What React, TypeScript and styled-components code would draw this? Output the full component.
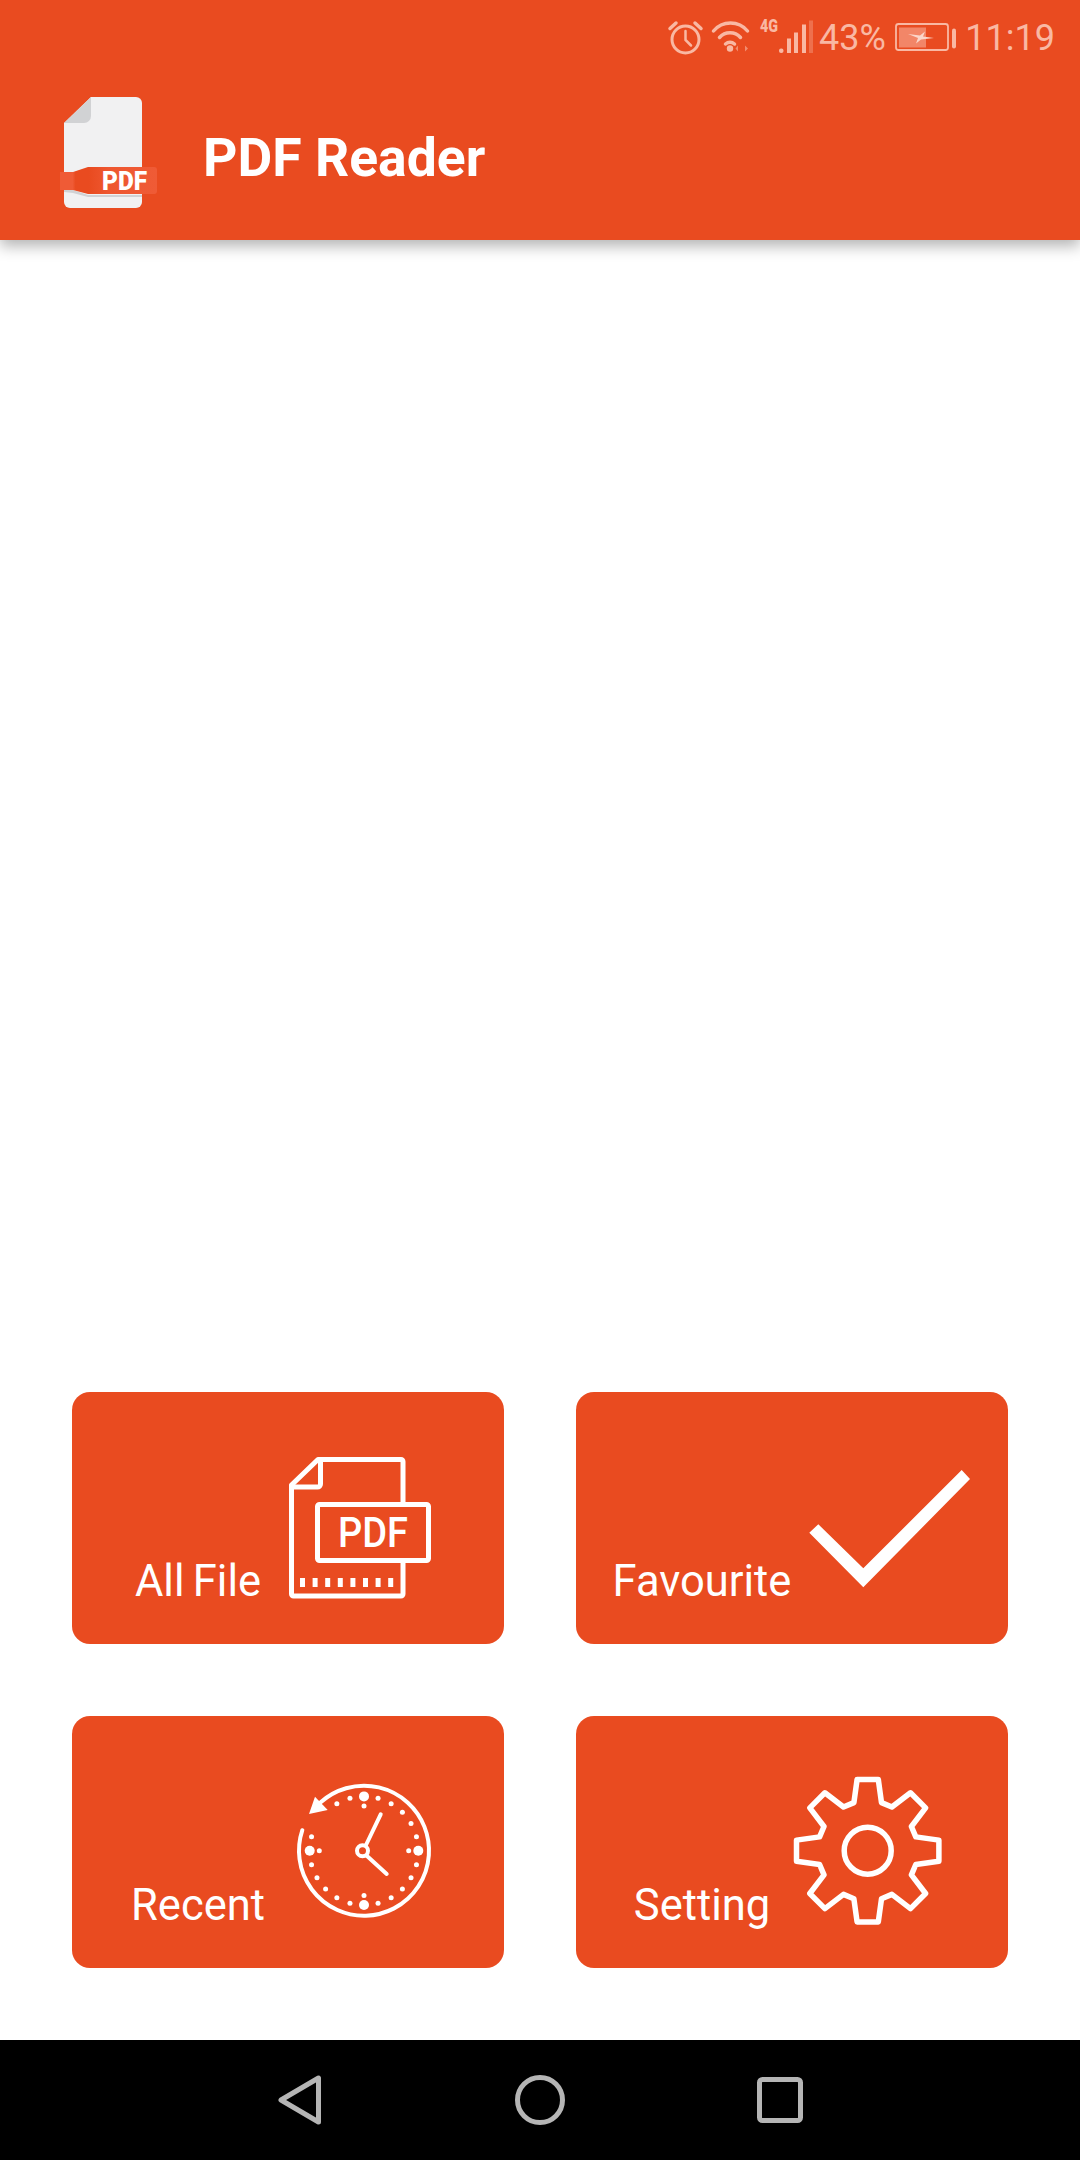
import React from "react";
import styled, { createGlobalStyle } from "styled-components";

const ORANGE = "#e94b20";
const STATUS = "#f9b8a3";

const GlobalStyle = createGlobalStyle`
  html, body {
    margin: 0;
    padding: 0;
    background: #ffffff;
    font-family: Roboto, "Liberation Sans", sans-serif;
  }
`;

function Logo() {
  return (
    <LogoSvg viewBox="60 97 97 111">
      <defs>
        <linearGradient id="ribbon" x1="0" x2="1" y1="0" y2="0">
          <stop offset="0" stopColor="#ef5b36" />
          <stop offset="0.13" stopColor="#ef5b36" />
          <stop offset="0.16" stopColor={ORANGE} />
          <stop offset="0.3" stopColor={ORANGE} />
          <stop offset="0.5" stopColor="#ee5730" />
          <stop offset="1" stopColor="#ef5b36" />
        </linearGradient>
      </defs>
      <path
        d="M91 97H136a6 6 0 0 1 6 6V202a6 6 0 0 1-6 6H70a6 6 0 0 1-6-6V123Z"
        fill="#f1f1f2"
      />
      <path d="M91 97L64 123H84a7 7 0 0 0 7-7Z" fill="#d1d2d4" />
      <path d="M64 190H73L88 195H142V197H88L73 193L64 192Z" fill="#d1d2d4" />
      <path
        d="M60 172H73L88 167H154a3 3 0 0 1 3 3V191a3 3 0 0 1-3 3H88L73 190H60Z"
        fill="url(#ribbon)"
      />
      <LogoText x="102" y="189.5" textLength="45" lengthAdjust="spacingAndGlyphs">
        PDF
      </LogoText>
    </LogoSvg>
  );
}

function StatusIcons() {
  return (
    <StatusSvg viewBox="668 12.5 148 50" width="148" height="50">
      <g fill="none" stroke={STATUS} strokeWidth="3" strokeLinecap="round">
        <circle cx="686.5" cy="39" r="13.5" />
        <path d="M686.5 30.5V39.5L692 45" strokeWidth="2.5" />
        <path d="M671 28L677 22.5M702 28L696 22.5" strokeWidth="3.5" />
        <path d="M714.5 30.5A22 22 0 0 1 748.5 30.5" strokeWidth="3.5" />
        <path d="M720.5 37A14 14 0 0 1 741.5 37" strokeWidth="3.5" />
        <path d="M726.5 43.5A7 7 0 0 1 735.5 43.5" strokeWidth="3.5" />
      </g>
      <circle cx="731" cy="48" r="3.2" fill={STATUS} />
      <path d="M739 51V45L736.5 48ZM746 45V51L749 48Z" fill={STATUS} opacity="0.6" />
      <FourG x="761" y="31.5" textLength="18" lengthAdjust="spacingAndGlyphs">
        4G
      </FourG>
      <g fill={STATUS}>
        <rect x="780" y="48" width="4.5" height="4.5" rx="2" />
        <rect x="788" y="38" width="4" height="14.5" />
        <rect x="795" y="32" width="4" height="20.5" />
        <rect x="803" y="24" width="4" height="28.5" />
        <rect x="810" y="20" width="4" height="32.5" opacity="0.35" />
      </g>
    </StatusSvg>
  );
}

function Battery() {
  return (
    <StatusSvg viewBox="894 17.5 64 40" width="64" height="40">
      <rect
        x="897"
        y="23.5"
        width="52"
        height="26"
        rx="2.5"
        fill="none"
        stroke={STATUS}
        strokeWidth="1.8"
      />
      <rect x="900" y="27" width="27" height="20" fill="#f28668" />
      <path
        d="M909 33.5L921 35L926 31L924 36L935 37.5L922 39L917 43L919 37.5Z"
        fill="#fbd6ca"
      />
      <rect x="953" y="28" width="4" height="20" rx="2" fill={STATUS} />
    </StatusSvg>
  );
}

function FileIcon() {
  const dots = [0, 1, 2, 3, 4, 5, 6, 7];
  return (
    <CardIcon viewBox="217 0 215 252">
      <g fill="none" stroke="#fff" strokeWidth="5" strokeLinejoin="round" strokeLinecap="round">
        <path d="M331 110V69.5a2 2 0 0 0-2-2H246L219.5 93V202a2 2 0 0 0 2 2H329a2 2 0 0 0 2-2V170" />
        <path d="M248.5 68V92a3 3 0 0 1-3 3H220" />
        <rect x="245.5" y="112.5" width="111" height="56" rx="2" />
      </g>
      <IconLabel x="266" y="155" textLength="70" lengthAdjust="spacingAndGlyphs">
        PDF
      </IconLabel>
      {dots.map((d) => (
        <rect key={d} x={228 + d * 12.6} y="186" width="5" height="9" fill="#fff" />
      ))}
    </CardIcon>
  );
}

function CheckIcon() {
  return (
    <CardIcon viewBox="217 0 215 252">
      <polygon
        points="242.3,132.3 287.3,176.3 385.7,78 394,87 287.3,195.3 233.3,140.7"
        fill="#fff"
      />
    </CardIcon>
  );
}

function ClockIcon() {
  const cx = 292;
  const cy = 134.7;
  const angles = Array.from({ length: 24 }, (_, i) => i * 15).filter(
    (a) => a !== 300 && a !== 315
  );
  const at = (a: number, r: number) => ({
    x: cx + r * Math.sin((a * Math.PI) / 180),
    y: cy - r * Math.cos((a * Math.PI) / 180),
  });
  const start = at(288.4, 65);
  const end = at(318.2, 65);
  return (
    <CardIcon viewBox="217 0 215 252">
      <g fill="none" stroke="#fff" strokeWidth="4" strokeLinecap="round">
        <path d={`M${start.x} ${start.y}A65 65 0 1 0 ${end.x} ${end.y}`} />
        <circle cx="290.5" cy={cy} r="5.5" />
        <path d="M294 129L308.7 98.3M295 140L314.7 158" />
      </g>
      <polygon points="237,98 243,80.7 255.7,94" fill="#fff" />
      {angles.map((a) => {
        const p = at(a, 54.3);
        return <circle key={a} cx={p.x} cy={p.y} r={a % 90 === 0 ? 5 : 2.5} fill="#fff" />;
      })}
      {[0, 90, 180, 270].map((a) => {
        const p = at(a, 44.7);
        return <circle key={a} cx={p.x} cy={p.y} r="2.5" fill="#fff" />;
      })}
    </CardIcon>
  );
}

function GearIcon() {
  const cx = 291.7;
  const cy = 134.7;
  const pts: string[] = [];
  for (let i = 0; i < 8; i++) {
    const a = i * 45;
    [
      [-16, 50],
      [-8.5, 72],
      [8.5, 72],
      [16, 50],
    ].forEach(([off, r]) => {
      const t = ((a + off) * Math.PI) / 180;
      pts.push(`${(cx + r * Math.sin(t)).toFixed(1)},${(cy - r * Math.cos(t)).toFixed(1)}`);
    });
  }
  return (
    <CardIcon viewBox="217 0 215 252">
      <g fill="none" stroke="#fff" strokeWidth="5.5" strokeLinejoin="round">
        <polygon points={pts.join(" ")} />
        <circle cx={cx} cy={cy} r="23.5" />
      </g>
    </CardIcon>
  );
}

const items = [
  { label: "All File", Icon: FileIcon },
  { label: "Favourite", Icon: CheckIcon },
  { label: "Recent", Icon: ClockIcon },
  { label: "Setting", Icon: GearIcon },
];

function App() {
  return (
    <Page>
      <GlobalStyle />
      <Header>
        <StatusBar>
          <StatusIcons />
          <Percent>43%</Percent>
          <Battery />
          <Time>11:19</Time>
        </StatusBar>
        <TitleRow>
          <Logo />
          <Title>PDF Reader</Title>
        </TitleRow>
      </Header>
      <Main>
        <Grid>
          {items.map(({ label, Icon }) => (
            <Card key={label}>
              <CardLabel>{label}</CardLabel>
              <Icon />
            </Card>
          ))}
        </Grid>
      </Main>
      <NavBar>
        <NavIcon viewBox="0 0 50 50">
          <polygon points="6,25 43.5,3 43.5,47" />
        </NavIcon>
        <NavIcon viewBox="0 0 50 50">
          <circle cx="25" cy="25" r="22.5" />
        </NavIcon>
        <NavIcon viewBox="0 0 50 50">
          <rect x="4.5" y="4.5" width="41" height="41" rx="3" />
        </NavIcon>
      </NavBar>
    </Page>
  );
}

const Page = styled.div`
  width: 1080px;
  height: 2160px;
  display: flex;
  flex-direction: column;
  background: #ffffff;
  overflow: hidden;
`;

const Header = styled.header`
  height: 240px;
  background: ${ORANGE};
  box-shadow: 0 6px 14px rgba(0, 0, 0, 0.3);
  flex-shrink: 0;
`;

const StatusBar = styled.div`
  height: 75px;
  display: flex;
  justify-content: flex-end;
  align-items: center;
  padding-right: 25px;
  color: ${STATUS};
  font-size: 36px;
`;

const StatusSvg = styled.svg`
  display: block;
  flex-shrink: 0;
`;

const FourG = styled.text`
  font-family: Roboto, sans-serif;
  font-weight: 900;
  font-size: 18px;
  fill: ${STATUS};
`;

const Percent = styled.span`
  margin-left: 4px;
  margin-right: 7px;
`;

const Time = styled.span`
  margin-left: 8.5px;
`;

const TitleRow = styled.div`
  height: 165px;
  display: flex;
  align-items: center;
  padding-left: 60px;
  gap: 46px;
`;

const LogoSvg = styled.svg`
  width: 97px;
  height: 111px;
  margin-bottom: 10px;
  flex-shrink: 0;
`;

const LogoText = styled.text`
  font-family: Roboto, sans-serif;
  font-weight: 900;
  font-size: 25px;
  fill: #ffffff;
`;

const Title = styled.h1`
  margin: 0;
  color: #ffffff;
  font-size: 53.5px;
  font-weight: 700;
  line-height: 60px;
`;

const Main = styled.main`
  flex: 1;
  display: flex;
  flex-direction: column;
  justify-content: flex-end;
  padding: 0 72px 72px;
`;

const Grid = styled.div`
  display: grid;
  grid-template-columns: 432px 432px;
  grid-auto-rows: 252px;
  gap: 72px;
`;

const Card = styled.div`
  display: grid;
  grid-template-columns: 217px 215px;
  background: ${ORANGE};
  border-radius: 18px;
`;

const CardLabel = styled.span`
  align-self: end;
  padding: 0 0 38px 35px;
  text-align: center;
  white-space: nowrap;
  color: #ffffff;
  font-size: 43.5px;
  word-spacing: -2.5px;
  line-height: 48px;
`;

const CardIcon = styled.svg`
  display: block;
  width: 215px;
  height: 252px;
  overflow: visible;
`;

const IconLabel = styled.text`
  font-family: Roboto, sans-serif;
  font-weight: 500;
  font-size: 42px;
  fill: #ffffff;
`;

const NavBar = styled.nav`
  height: 120px;
  flex-shrink: 0;
  background: #000000;
  display: flex;
  justify-content: center;
  align-items: center;
  gap: 190px;
`;

const NavIcon = styled.svg`
  width: 50px;
  height: 50px;
  fill: none;
  stroke: #b5b5b5;
  stroke-width: 5;
  stroke-linejoin: round;
`;

export default App;
